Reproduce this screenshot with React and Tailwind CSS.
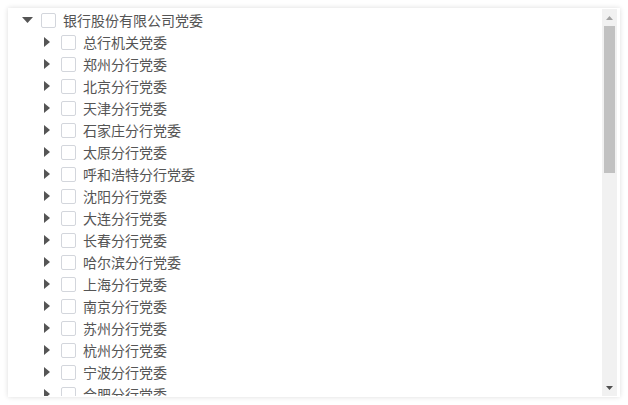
import React from "react";

const children = [
  "总行机关党委",
  "郑州分行党委",
  "北京分行党委",
  "天津分行党委",
  "石家庄分行党委",
  "太原分行党委",
  "呼和浩特分行党委",
  "沈阳分行党委",
  "大连分行党委",
  "长春分行党委",
  "哈尔滨分行党委",
  "上海分行党委",
  "南京分行党委",
  "苏州分行党委",
  "杭州分行党委",
  "宁波分行党委",
  "合肥分行党委",
  "福州分行党委",
  "济南分行党委",
];

function Checkbox() {
  return (
    <span className="w-[15px] h-[15px] shrink-0 border border-[#d3d6dc] rounded-[2px] bg-white" />
  );
}

function CaretDown() {
  return (
    <svg width="11" height="6" viewBox="0 0 11 6">
      <path d="M0 0 L11 0 L5.5 6 Z" fill="#555" />
    </svg>
  );
}

function CaretRight() {
  return (
    <svg width="6" height="10" viewBox="0 0 6 10">
      <path d="M0 0 L6 5 L0 10 Z" fill="#555" />
    </svg>
  );
}

function Row({ level, open, label }) {
  return (
    <div
      className={`h-[22px] flex items-center ${level === 0 ? "pl-[9px]" : "pl-[29px]"}`}
    >
      <span className="w-[20px] h-[20px] flex items-center justify-center shrink-0">
        {open ? <CaretDown /> : <CaretRight />}
      </span>
      <span className="ml-[4px] flex items-center">
        <Checkbox />
      </span>
      <span className="ml-[7px] text-[14px] leading-[22px] text-[#555] whitespace-nowrap">
        {label}
      </span>
    </div>
  );
}

export default function App() {
  return (
    <div
      className="w-[628px] h-[405px] bg-white p-2"
      style={{ fontFamily: '"Microsoft YaHei", "Noto Sans CJK SC", "Noto Sans", sans-serif' }}
    >
      <div className="w-[612px] h-[389px] bg-white shadow-[0_0_5px_rgba(0,0,0,0.14)] flex pt-px pb-px pr-[3px]">
        <div className="flex-1 overflow-hidden">
          <Row level={0} open label="银行股份有限公司党委" />
          {children.map((c) => (
            <Row key={c} level={1} label={c} />
          ))}
        </div>
        <div className="w-[15px] bg-[#f1f1f1] flex flex-col">
          <div className="h-[17px] flex items-center justify-center">
            <svg width="7" height="4" viewBox="0 0 7 4">
              <path d="M0 4 L7 4 L3.5 0 Z" fill="#a3a3a3" />
            </svg>
          </div>
          <div className="mx-[2px] h-[147px] bg-[#c1c1c1]" />
          <div className="flex-1" />
          <div className="h-[17px] flex items-center justify-center">
            <svg width="7" height="4" viewBox="0 0 7 4">
              <path d="M0 0 L7 0 L3.5 4 Z" fill="#505050" />
            </svg>
          </div>
        </div>
      </div>
    </div>
  );
}
